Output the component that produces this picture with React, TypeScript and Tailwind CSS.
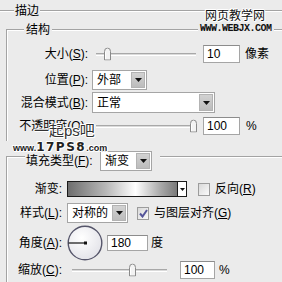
import type { ReactNode } from 'react'

const bg = 'bg-[#ebebeb]'

function Line({ className = '' }: { className?: string }) {
  return <div className={`h-[2px] border-t border-b border-t-[#a3a3a3] border-b-white ${className}`} />
}

function Key({ k }: { k: string }) {
  return <span className="underline underline-offset-1">{k}</span>
}

function Label({ text, k, w }: { text: string; k: string; w: string }) {
  return (
    <div className={`${w} shrink-0 text-right leading-[14px]`}>
      {text}(<Key k={k} />):
    </div>
  )
}

function Tri({ size = 'big' }: { size?: 'big' | 'small' }) {
  return size === 'big' ? (
    <svg width="7" height="4" viewBox="0 0 7 4">
      <path d="M0 0h7L3.5 4z" fill="#111" />
    </svg>
  ) : (
    <svg width="5" height="3" viewBox="0 0 5 3">
      <path d="M0 0h5L2.5 3z" fill="#111" />
    </svg>
  )
}

function Select({ value, className = '' }: { value: string; className?: string }) {
  return (
    <div className={`flex h-full items-stretch border border-[#a5a5a5] bg-white ${className}`}>
      <span className="flex flex-1 items-center pl-[4px] leading-none">{value}</span>
      <div className="m-[1px] flex w-[14px] items-center justify-center border border-[#b3b3b3] bg-gradient-to-b from-[#d2d2d2] to-[#bcbcbc]">
        <Tri />
      </div>
    </div>
  )
}

function Field({ value, className = '' }: { value: string; className?: string }) {
  return (
    <div className={`flex h-full items-center border border-[#a5a5a5] border-t-[#8c8c8c] bg-white pl-[3px] leading-none ${className}`}>
      {value}
    </div>
  )
}

function Thumb({ left }: { left: number }) {
  return (
    <svg
      width="9"
      height="13"
      viewBox="0 0 9 13"
      className="absolute top-1/2 -translate-y-1/2"
      style={{ left }}
    >
      <path d="M1.5 12.5V4Q1.5 .5 4.5 .5T7.5 4v8.5z" fill="#f3f3f3" stroke="#8a8a8a" />
      <path d="M2.5 11.5V4.5" stroke="#fff" />
    </svg>
  )
}

function Slider({ thumb, className = '' }: { thumb: number; className?: string }) {
  return (
    <div className={`relative flex h-full items-center ${className}`}>
      <div className="h-[3px] w-full border-t border-b border-t-[#a8a8a8] border-b-white bg-[#dadada]" />
      <Thumb left={thumb} />
    </div>
  )
}

function Check({ checked = false }: { checked?: boolean }) {
  return (
    <div className="flex h-[13px] w-[12px] shrink-0 items-center justify-center border border-[#9c9c9c] bg-gradient-to-br from-[#d9d9d9] to-[#fafafa]">
      {checked && (
        <svg width="9" height="9" viewBox="0 0 9 9">
          <path d="M1 4.5l2.5 3L8 1" fill="none" stroke="#55559a" strokeWidth="2" />
        </svg>
      )}
    </div>
  )
}

function Group({ header, children, className = '' }: { header: ReactNode; children: ReactNode; className?: string }) {
  return (
    <div className={`border-l border-t border-[#a3a3a3] shadow-[inset_1px_1px_0_#fff] ${className}`}>
      {header}
      {children}
    </div>
  )
}

const outline =
  '[text-shadow:1px_0_0_#fff,-1px_0_0_#fff,0_1px_0_#fff,0_-1px_0_#fff,1px_1px_0_#fff,-1px_-1px_0_#fff]'

export default function App() {
  return (
    <div
      className={`relative h-[282px] w-[282px] overflow-hidden ${bg} font-['Liberation_Sans','Noto_Sans_CJK_SC',sans-serif] text-[12px] text-black`}
    >
      {/* 描边 */}
      <div className="mt-[4px] flex h-[14px] items-center">
        <Line className="w-[14px]" />
        <span className="px-[1px] leading-[14px]">描边</span>
        <Line className="flex-1" />
      </div>

      {/* 结构 */}
      <Group
        className="ml-[6px] mt-[11px] pb-[6px]"
        header={
          <div className="-mt-[7px] flex h-[14px]">
            <div className="w-[17px]" />
            <span className={`${bg} px-[2px] leading-[14px]`}>结构</span>
          </div>
        }
      >
        <div className="mt-[8px] flex h-[18px] items-center">
          <Label text="大小" k="S" w="w-[81px]" />
          <Slider thumb={7} className="ml-[8px] w-[100px]" />
          <Field value="10" className="ml-[7px] w-[37px]" />
          <span className="ml-[5px]">像素</span>
        </div>
        <div className="mt-[7px] flex h-[20px] items-center">
          <Label text="位置" k="P" w="w-[81px]" />
          <Select value="外部" className="ml-[4px] w-[55px]" />
        </div>
        <div className="mt-[2px] flex h-[21px] items-center">
          <Label text="混合模式" k="B" w="w-[81px]" />
          <Select value="正常" className="ml-[4px] w-[123px]" />
        </div>
        <div className="mt-[4px] flex h-[18px] items-center">
          <Label text="不透明度" k="O" w="w-[81px]" />
          <Slider thumb={93} className="ml-[8px] w-[100px]" />
          <Field value="100" className="ml-[7px] w-[37px]" />
          <span className="ml-[6px]">%</span>
        </div>
      </Group>

      {/* 填充类型 */}
      <Group
        className="ml-[6px] mt-[15px] h-[200px]"
        header={
          <div className="-mt-[6px] flex h-[20px] items-stretch">
            <div className="w-[18px]" />
            <div className={`${bg} flex w-[75px] items-center pl-[1px]`}>
              <span className="leading-[14px]">
                填充类型(<Key k="F" />):
              </span>
            </div>
            <Select value="渐变" className="w-[52px]" />
            <div className={`${bg} w-[8px]`} />
          </div>
        }
      >
        <div className="mt-[10px] flex h-[16px] items-center">
          <div className="w-[55px] shrink-0 text-right leading-[14px]">渐变:</div>
          <div className="ml-[5px] flex h-full w-[120px] border border-[#1a1a1a]">
            <div className="flex-1 bg-[linear-gradient(90deg,#6e6e6e_0%,#b8b8b8_35%,#ffffff_62%,#a9a9a9_85%,#7a7a7a_100%)]" />
            <div className="flex w-[9px] items-center justify-center border-l border-[#1a1a1a] bg-white">
              <Tri size="small" />
            </div>
          </div>
          <div className="ml-[11px]">
            <Check />
          </div>
          <span className="ml-[5px] leading-[14px]">
            反向(<Key k="R" />)
          </span>
        </div>

        <div className="mt-[6px] flex h-[20px] items-center">
          <Label text="样式" k="L" w="w-[55px]" />
          <Select value="对称的" className="ml-[5px] w-[61px]" />
          <div className="ml-[9px]">
            <Check checked />
          </div>
          <span className="ml-[5px] leading-[14px]">
            与图层对齐(<Key k="G" />)
          </span>
        </div>

        <div className="mt-[2px] flex h-[36px] items-center">
          <Label text="角度" k="A" w="w-[55px]" />
          <svg width="36" height="36" viewBox="0 0 36 36" className="ml-[5px] shrink-0">
            <defs>
              <radialGradient id="dial" cx="40%" cy="35%" r="70%">
                <stop offset="0%" stopColor="#ffffff" />
                <stop offset="100%" stopColor="#e2e2e8" />
              </radialGradient>
            </defs>
            <circle cx="18" cy="18" r="16.8" fill="url(#dial)" stroke="#55556a" strokeWidth="1.4" />
            <path d="M1.5 18H18" stroke="#111" strokeWidth="1.2" />
            <rect x="17" y="16.5" width="3" height="3" fill="#111" />
          </svg>
          <Field value="180" className="ml-[4px] !h-[16px] w-[41px]" />
          <span className="ml-[3px] leading-[14px]">度</span>
        </div>

        <div className="flex h-[18px] items-center">
          <Label text="缩放" k="C" w="w-[55px]" />
          <Slider thumb={56} className="ml-[10px] w-[95px]" />
          <Field value="100" className="ml-[13px] w-[35px]" />
          <span className="ml-[4px]">%</span>
        </div>
      </Group>

      {/* watermarks */}
      <div className={`absolute left-[205px] top-[9px] leading-[14px] text-[#111] ${outline}`}>网页教学网</div>
      <div
        className={`absolute left-[198px] top-[24px] ${bg} px-[2px] font-['Liberation_Mono',monospace] text-[10px] font-bold leading-[9px] tracking-[-0.5px] text-[#111]`}
      >
        WWW.WEBJX.COM
      </div>
      <div className={`absolute left-[34px] top-[122px] text-[15px] leading-[18px] text-[#333] ${outline}`}>
        一起ps吧
      </div>
      <div className={`absolute left-[13px] top-[142px] flex items-baseline font-bold leading-[10px] text-[#222] ${outline}`}>
        <span className="text-[9px]">www.</span>
        <span className="font-['DejaVu_Sans',sans-serif] text-[12px] tracking-[1.5px]">17PS8</span>
        <span className="text-[9px]">.com</span>
      </div>
    </div>
  )
}
